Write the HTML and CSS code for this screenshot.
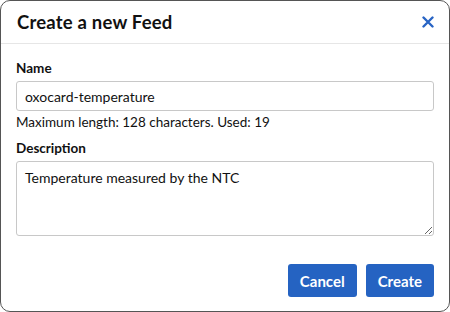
FILE: index.html
```html
<!DOCTYPE html>
<html lang="en">
<head>
    <meta charset="UTF-8">
    <meta name="viewport" content="width=device-width, initial-scale=1.0">
    <title>Create a new Feed</title>
    <link rel="stylesheet" href="styles.css">
</head>
<body>
    <div class="dialog">
        <!-- header -->
        <div class="dialog-header">
            <h2>Create a new Feed</h2>
            <button class="close" aria-label="Close">
                <svg width="12" height="12" viewBox="0 0 12 12">
                    <path d="M1.5 1.5 L10.5 10.5 M10.5 1.5 L1.5 10.5" stroke="#2864c4" stroke-width="2.4" stroke-linecap="round"/>
                </svg>
            </button>
        </div>

        <!-- body -->
        <div class="dialog-body">
            <div class="field">
                <label for="name">Name</label>
                <input type="text" id="name" value="oxocard-temperature">
                <div class="hint">Maximum length: 128 characters. Used: 19</div>
            </div>
            <div class="field">
                <label for="description">Description</label>
                <textarea id="description">Temperature measured by the NTC</textarea>
            </div>
        </div>

        <!-- footer -->
        <div class="dialog-footer">
            <button class="btn">Cancel</button>
            <button class="btn">Create</button>
        </div>
    </div>
</body>
</html>
```

FILE: styles.css
```css
body {
    margin: 0;
    font-family: Lato, "Liberation Sans", sans-serif;
    color: #111;
    background: #fff;
}
.dialog {
    box-sizing: border-box;
    width: 450px;
    height: 312px;
    border: 1.5px solid #555;
    border-radius: 10px;
    background: #fff;
}
.dialog-header {
    display: flex;
    align-items: center;
    justify-content: space-between;
    height: 42px;
    padding: 0 15px 0 16px;
    border-bottom: 1px solid #e6e6e6;
}
.dialog-header h2 {
    margin: 0;
    font-size: 18.5px;
    font-weight: 700;
    letter-spacing: 0.2px;
}
.close {
    border: 0;
    background: none;
    padding: 0;
    display: flex;
    cursor: pointer;
}
.dialog-body {
    padding: 16px 15px 0 15px;
}
.field {
    margin-bottom: 10px;
}
label {
    display: block;
    font-size: 13.5px;
    font-weight: 700;
    margin-bottom: 5px;
}
input[type="text"], textarea {
    box-sizing: border-box;
    width: 100%;
    font-family: inherit;
    font-size: 14px;
    color: #111;
    border: 1px solid #c8c8c8;
    border-radius: 3px;
    padding: 0 8px;
}
input[type="text"] {
    height: 30px;
}
textarea {
    height: 75px;
    padding-top: 7px;
    resize: vertical;
    display: block;
}
.hint {
    font-size: 13.5px;
    margin-top: 3px;
}
.dialog-footer {
    display: flex;
    justify-content: flex-end;
    gap: 9px;
    padding: 18px 15px 0 0;
}
.btn {
    height: 33px;
    padding: 0 12px;
    font-family: inherit;
    font-size: 15px;
    font-weight: 700;
    color: #fff;
    background: #2563c2;
    border: 0;
    border-radius: 3px;
}
```
